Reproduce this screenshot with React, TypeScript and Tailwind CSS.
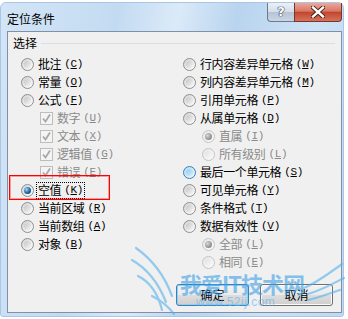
import React from "react";

type Item = {
  t: string;
  k: string;
  kind?: "radio" | "check";
  sub?: boolean;
  disabled?: boolean;
  checked?: boolean;
  hover?: boolean;
  focus?: boolean;
};

const leftItems: Item[] = [
  { t: "批注", k: "C" },
  { t: "常量", k: "O" },
  { t: "公式", k: "F" },
  { t: "数字", k: "U", kind: "check", sub: true, disabled: true, checked: true },
  { t: "文本", k: "X", kind: "check", sub: true, disabled: true, checked: true },
  { t: "逻辑值", k: "G", kind: "check", sub: true, disabled: true, checked: true },
  { t: "错误", k: "E", kind: "check", sub: true, disabled: true, checked: true },
  { t: "空值", k: "K", checked: true, focus: true },
  { t: "当前区域", k: "R" },
  { t: "当前数组", k: "A" },
  { t: "对象", k: "B" },
];

const rightItems: Item[] = [
  { t: "行内容差异单元格", k: "W" },
  { t: "列内容差异单元格", k: "M" },
  { t: "引用单元格", k: "P" },
  { t: "从属单元格", k: "D" },
  { t: "直属", k: "I", sub: true, disabled: true, checked: true },
  { t: "所有级别", k: "L", sub: true, disabled: true },
  { t: "最后一个单元格", k: "S", hover: true },
  { t: "可见单元格", k: "Y" },
  { t: "条件格式", k: "T" },
  { t: "数据有效性", k: "V" },
  { t: "全部", k: "L", sub: true, disabled: true, checked: true },
  { t: "相同", k: "E", sub: true, disabled: true },
];

function Radio({ checked, disabled, hover }: { checked?: boolean; disabled?: boolean; hover?: boolean }) {
  const outer = hover
    ? "border-[#3c7fb1] bg-gradient-to-br from-[#b6dcf6] to-[#eaf6fd]"
    : disabled
    ? "border-[#c4c4c4] bg-gradient-to-br from-[#e6e6e6] to-[#fbfbfb]"
    : "border-[#8f8f8f] bg-gradient-to-br from-[#d2d2d2] to-[#ffffff]";
  let inner = hover
    ? "bg-gradient-to-br from-[#8fcaf0] to-[#d7eefc]"
    : disabled
    ? "bg-gradient-to-br from-[#e2e2e2] to-[#f8f8f8]"
    : "bg-gradient-to-br from-[#c6c6c6] to-[#f4f4f4]";
  if (checked && !disabled) inner = "bg-[radial-gradient(circle_at_35%_35%,#9fd6f8,#1f64a0_55%,#0c3c6a)]";
  if (checked && disabled) inner = "bg-[radial-gradient(circle_at_35%_35%,#d8d8d8,#959595_60%,#7a7a7a)]";
  return (
    <span className={`w-[13px] h-[13px] shrink-0 rounded-full border flex items-center justify-center ${outer}`}>
      <span className={`w-[7px] h-[7px] rounded-full ${inner}`} />
    </span>
  );
}

function Check() {
  return (
    <span className="w-[13px] h-[13px] shrink-0 border border-[#bdbdbd] bg-[#f4f4f4] flex items-center justify-center">
      <svg width="11" height="11" viewBox="0 0 11 11">
        <path d="M2 5.5 L4.5 8.5 L9 1.5" fill="none" stroke="#a8a8a8" strokeWidth="1.8" />
      </svg>
    </span>
  );
}

function Row({ it }: { it: Item }) {
  const color = it.disabled ? "text-[#8a8a8a]" : "text-black";
  return (
    <div className={`h-[18px] flex items-center gap-[4px] ${it.sub ? "pl-[19px]" : ""}`}>
      {it.kind === "check" ? <Check /> : <Radio checked={it.checked} disabled={it.disabled} hover={it.hover} />}
      <span
        className={`flex items-center h-[15px] px-[1px] -ml-[1px] ${color} ${
          it.focus ? "outline outline-1 outline-dotted outline-black" : ""
        }`}
      >
        <span className="tracking-[-0.4px]">{it.t}</span>
        <span className="ml-[3px] font-['Liberation_Mono',monospace] text-[11px] tracking-[-0.3px]">
          (<span className="underline">{it.k}</span>)
        </span>
      </span>
    </div>
  );
}

function Button({ label, def }: { label: string; def?: boolean }) {
  return (
    <div
      className={`w-[73px] h-[22px] rounded-[3px] border flex items-center justify-center text-black ${
        def
          ? "border-[#3c7fb1] shadow-[inset_0_0_0_1px_#8fd0f7]"
          : "border-[#707070] shadow-[inset_0_0_0_1px_#fbfbfb]"
      } bg-[linear-gradient(#f2f2f2_0%,#ebebeb_50%,#dddddd_51%,#cfcfcf_100%)]`}
    >
      {label}
    </div>
  );
}

export default function App() {
  return (
    <div className="w-[348px] h-[319px] bg-white relative overflow-hidden font-['Noto_Sans_CJK_SC','Noto_Sans',sans-serif] text-[12px] leading-[12px]">
      <div className="mt-[2px] w-[344px] h-[315px] rounded-t-[6px] rounded-b-[3px] border border-[#a9c6e6] bg-[linear-gradient(100deg,#d3e5f6_0%,#c3dbf2_30%,#dbeaf8_45%,#b9d4ef_60%,#cde2f6_80%,#c0d8f0_100%)] flex flex-col pl-[6px] pr-[1px] pb-[3px]">
        {/* title bar */}
        <div className="h-[28px] flex items-start">
          <div className="mt-[10px] text-[12px] text-black">定位条件</div>
          <div className="ml-auto flex">
            <div className="w-[27px] h-[19px] rounded-bl-[4px] border border-[#6a7a90] border-t-0 border-r-0 bg-[linear-gradient(#eaf0f6_0%,#d4dde8_50%,#b6c3d3_51%,#c9d6e5_100%)] flex items-center justify-center">
              <span className="text-white font-bold text-[13px] font-['DejaVu_Sans',sans-serif] [text-shadow:0_0_1px_#22324a,0_0_1px_#22324a,0_0_1px_#22324a]">?</span>
            </div>
            <div className="w-[48px] h-[19px] rounded-br-[4px] border border-[#7a3528] border-t-0 bg-[linear-gradient(#eba89a_0%,#d97866_45%,#c2452e_52%,#d5735c_100%)] flex items-center justify-center">
              <svg width="14" height="12" viewBox="0 0 14 12">
                <path d="M2 1.5 L12 10.5 M12 1.5 L2 10.5" stroke="#3b1a14" strokeWidth="4.2" strokeLinecap="square" />
                <path d="M2 1.5 L12 10.5 M12 1.5 L2 10.5" stroke="#ffffff" strokeWidth="2.4" strokeLinecap="square" />
              </svg>
            </div>
          </div>
        </div>
        {/* client area */}
        <div className="flex-1 border border-[#7f90a8] bg-[#f0f0f0] flex flex-col">
          <div className="mt-[5px] ml-[5px] mr-[6px] flex items-center gap-[4px]">
            <span>选择</span>
            <span className="flex-1 h-px bg-[#d5dfe5]" />
          </div>
          <div className="mt-[6px] pl-[13px] grid grid-cols-[162px_1fr]">
            <div className="flex flex-col">
              {leftItems.map((it, i) => (
                <Row key={i} it={it} />
              ))}
            </div>
            <div className="flex flex-col">
              {rightItems.map((it, i) => (
                <Row key={i} it={it} />
              ))}
            </div>
          </div>
          <div className="mt-[13px] pr-[8px] flex justify-end gap-[11px]">
            <Button label="确定" def />
            <Button label="取消" />
          </div>
        </div>
      </div>

      {/* red annotation box */}
      <div className="absolute left-[9px] top-[175px] w-[101px] h-[25px] border border-solid border-[#ff0000] shadow-[inset_0_0_0_1px_rgba(255,0,0,0.35)]" />

      {/* watermark */}
      <div className="absolute left-[128px] top-[244px] w-[220px] h-[72px] pointer-events-none opacity-60">
        <svg className="absolute left-0 top-0" width="220" height="72" viewBox="0 0 220 72">
          <g fill="none" stroke="#55b2ee" strokeWidth="2.2" strokeLinecap="round">
            <path d="M8 4 C22 14 36 30 44 52" />
            <path d="M4 16 C18 24 30 38 38 58" />
            <path d="M10 32 C22 38 30 50 34 66" />
            <path d="M24 52 C32 56 40 62 46 70" />
            <path d="M214 20 C200 30 190 38 176 44" />
            <path d="M216 34 C204 40 194 46 180 50" />
            <path d="M212 46 C200 50 190 54 180 56" />
          </g>
        </svg>
        <div className="absolute left-[52px] top-[28px] text-[22px] leading-[22px] font-bold text-[#3d9fe6] tracking-[-1px] font-['Noto_Sans_CJK_SC',sans-serif]">
          我爱IT技术网
        </div>
        <div className="absolute left-[68px] top-[52px] text-[12px] leading-[12px] text-[#5fb4ee] font-['Liberation_Sans',sans-serif] tracking-[0.5px]">
          www.52ij.com
        </div>
      </div>
    </div>
  );
}
